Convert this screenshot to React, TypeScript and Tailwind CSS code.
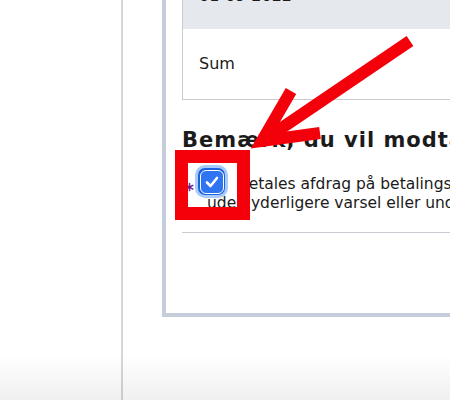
import React from 'react';

const font = { fontFamily: '"DejaVu Sans", Verdana, sans-serif' };

const CheckMark: React.FC = () => (
  <div className="w-[33px] h-[33px] rounded-[10px] bg-[#a9cbfa] flex items-center justify-center">
    <div className="w-[27px] h-[27px] rounded-[7px] bg-[#1c62dc] p-[1.5px]">
      <div className="w-full h-full rounded-[6px] border-[1.5px] border-white bg-[#2f75f2] flex items-center justify-center">
        <svg width="14" height="12" viewBox="0 0 14 12" fill="none">
          <path d="M2 6.5 L5.5 10 L12 2" stroke="white" strokeWidth="2.6" strokeLinecap="round" strokeLinejoin="round" />
        </svg>
      </div>
    </div>
  </div>
);

const App: React.FC = () => {
  return (
    <div className="relative w-[450px] h-[400px] overflow-hidden bg-white text-[#1b1b1b]" style={font}>
      <div className="flex h-full">
        {/* left column */}
        <div className="w-[121px] shrink-0" />
        <div className="w-[2px] shrink-0 bg-[#d3d7dc]" />
        <div className="flex-1 pl-[39px] overflow-hidden">
          {/* panel */}
          <div className="w-[600px] -mt-[40px] border-l-4 border-b-4 border-[#c4cdd9] pl-4 pb-[80px]">
            {/* table */}
            <div className="border-l border-b border-[#c9cbcf]">
              <div className="h-[69px] bg-[#e5e9ee] pl-4 pt-[28px] text-[16px] leading-[16px]">01-09-2022</div>
              <div className="h-[70px] pl-4 flex items-center text-[16px]">Sum</div>
            </div>

            <h2 className="mt-[28px] text-[21px] tracking-[1px] font-bold leading-[24px] whitespace-nowrap">
              Bemærk, du vil modtage besked
            </h2>

            {/* consent row */}
            <div className="relative mt-[23px] pl-[25px] pb-[19px] text-[15.5px] leading-[19px] whitespace-nowrap">
              <span className="absolute left-[3px] top-[7px] text-[#7a1790] font-bold text-[17px] leading-[17px]">*</span>
              <div className="absolute left-[13px] -top-[10px]">
                <CheckMark />
              </div>
              <p className="indent-[31px]">
                Betales afdrag på betalingsservice, trækkes beløbet
                <br />
                uden yderligere varsel eller underretning
              </p>
            </div>
            <div className="h-px bg-[#c8ccd2]" />
          </div>
        </div>
      </div>

      {/* bottom fade */}
      <div className="absolute left-0 right-0 bottom-0 h-[45px] bg-gradient-to-b from-transparent to-black/[0.06] pointer-events-none" />

      {/* annotation: red box */}
      <div className="absolute left-[175px] top-[150px] w-[75px] h-[70px] border-[13px] border-[#f4000b] pointer-events-none" />

      {/* annotation: arrow */}
      <svg className="absolute inset-0 pointer-events-none" width="450" height="400" viewBox="0 0 450 400">
        <g stroke="#f4000b" strokeWidth="12" fill="none" strokeLinecap="butt" strokeLinejoin="miter">
          <path d="M410 41 L264 140" />
          <path d="M291 91 L262 141 L320 133" />
        </g>
      </svg>
    </div>
  );
};

export default App;
